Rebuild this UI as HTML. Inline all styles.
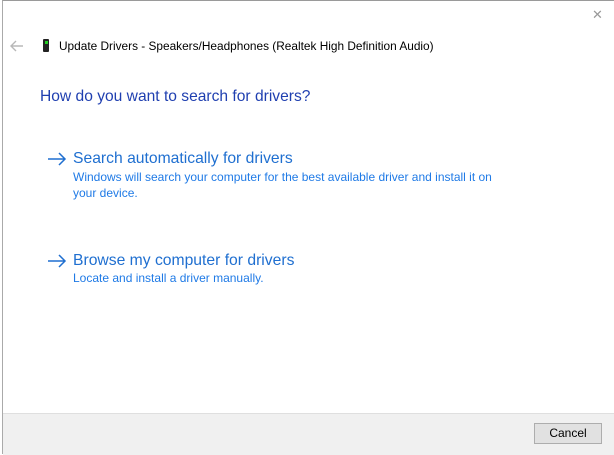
<!DOCTYPE html>
<html><head><meta charset="utf-8"><style>
html,body{margin:0;padding:0;width:614px;height:454px;overflow:hidden;background:#fff;font-family:"Liberation Sans",sans-serif;}
.win{position:absolute;left:2px;top:0;width:612px;height:454px;border-left:1px solid #aaa;border-top:1px solid #9a9a9a;box-sizing:border-box;background:#fff;}
.t{position:absolute;white-space:nowrap;}
.footer{position:absolute;left:3px;top:413px;width:611px;height:41px;background:#f0f0f0;border-top:1px solid #dfdfdf;}
.btn{position:absolute;left:534px;top:423px;width:66px;height:19px;border:1px solid #adadad;background:#e1e1e1;font-size:12px;text-align:center;line-height:19px;color:#000;}
</style></head><body>
<div class="win"></div>
<div class="t" style="left:592px;top:7px;font-size:13px;color:#999;">&#x2715;</div>
<svg style="position:absolute;left:10px;top:40px" width="14" height="12"><path d="M1 6H13M6 1L1 6L6 11" stroke="#b8b8b8" stroke-width="1.4" fill="none"/></svg>
<div style="position:absolute;left:43px;top:39px;width:6px;height:13px;background:#222;border-radius:1px"><div style="margin:2px auto 0;width:3px;height:3px;background:#2c2"></div></div>
<div class="t" style="left:59px;top:39px;font-size:11.85px;color:#000;">Update Drivers - Speakers/Headphones (Realtek High Definition Audio)</div>
<div class="t" style="left:40px;top:88px;font-size:15.6px;color:#1f3fb0;">How do you want to search for drivers?</div>
<svg style="position:absolute;left:47px;top:152px" width="20" height="14"><path d="M1 7H18M12 1L18 7L12 13" stroke="#1f6fd0" stroke-width="1.5" fill="none"/></svg>
<div class="t" style="left:73px;top:150px;font-size:15.7px;color:#1f6fd0;">Search automatically for drivers</div>
<div class="t" style="left:73px;top:169px;font-size:12px;line-height:16px;color:#1f7ae6;">Windows will search your computer for the best available driver and install it on<br>your device.</div>
<svg style="position:absolute;left:47px;top:254px" width="20" height="14"><path d="M1 7H18M12 1L18 7L12 13" stroke="#1f6fd0" stroke-width="1.5" fill="none"/></svg>
<div class="t" style="left:73px;top:252px;font-size:15.7px;color:#1f6fd0;">Browse my computer for drivers</div>
<div class="t" style="left:73px;top:271px;font-size:12px;color:#1f7ae6;">Locate and install a driver manually.</div>
<div class="footer"></div>
<div class="btn">Cancel</div>
</body></html>
